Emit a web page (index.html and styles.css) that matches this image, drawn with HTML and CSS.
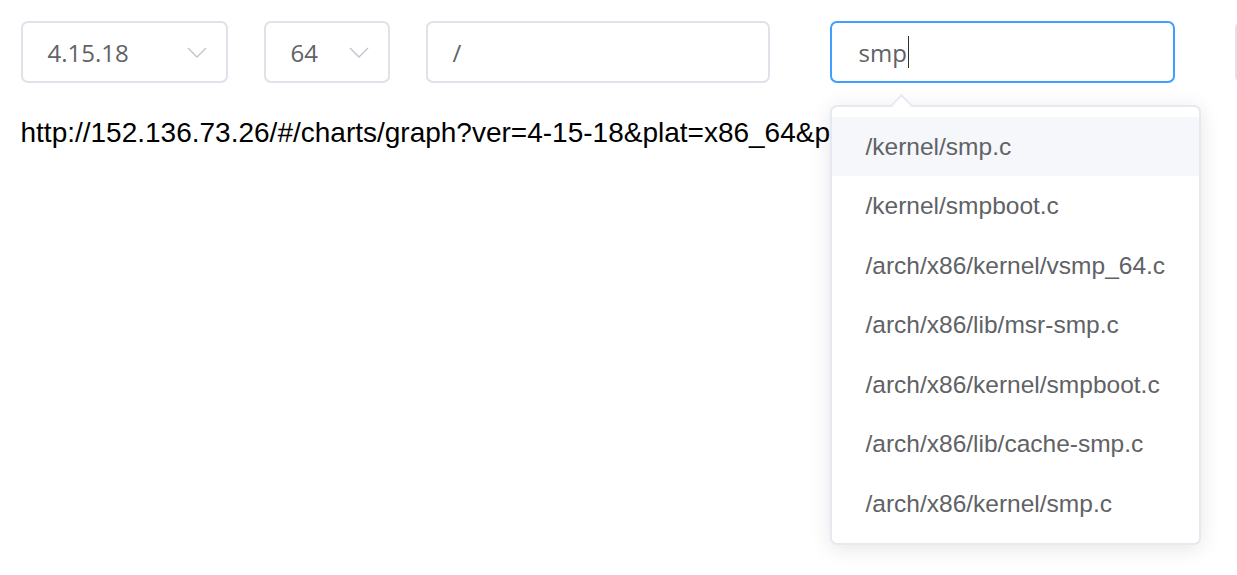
FILE: index.html
```html
<!DOCTYPE html>
<html lang="en">
<head>
<meta charset="utf-8">
<title>Graph search</title>
<link rel="stylesheet" href="styles.css">
</head>
<body>
<div class="page">
  <div class="toolbar">
    <div class="field select select-ver">
      <span class="value">4.15.18</span>
      <svg class="chevron" width="20" height="11" viewBox="0 0 20 11"><polyline points="1,1 10,10 19,1" fill="none" stroke="#c0c4cc" stroke-width="1.4"/></svg>
    </div>
    <div class="field select select-plat">
      <span class="value">64</span>
      <svg class="chevron" width="20" height="11" viewBox="0 0 20 11"><polyline points="1,1 10,10 19,1" fill="none" stroke="#c0c4cc" stroke-width="1.4"/></svg>
    </div>
    <div class="field input-path">
      <span class="value">/</span>
    </div>
    <div class="search-wrap">
      <div class="field input-search is-focus">
        <span class="value">smp</span><span class="caret"></span>
      </div>
      <div class="suggestions">
        <div class="arrow"></div>
        <ul class="suggest-list">
          <li class="item is-hover">/kernel/smp.c</li>
          <li class="item">/kernel/smpboot.c</li>
          <li class="item">/arch/x86/kernel/vsmp_64.c</li>
          <li class="item">/arch/x86/lib/msr-smp.c</li>
          <li class="item">/arch/x86/kernel/smpboot.c</li>
          <li class="item">/arch/x86/lib/cache-smp.c</li>
          <li class="item">/arch/x86/kernel/smp.c</li>
        </ul>
      </div>
    </div>
    <div class="field extra"></div>
  </div>
  <div class="url">http://152.136.73.26/#/charts/graph?ver=4-15-18&amp;plat=x86_64&amp;p</div>
</div>
</body>
</html>
```

FILE: styles.css
```css
html, body {
  margin: 0;
  padding: 0;
  background: #fff;
  overflow: hidden;
}

.page {
  padding: 21px 0 0 20.5px;
  height: 575px;
  box-sizing: border-box;
}

.toolbar {
  display: flex;
  flex-wrap: nowrap;
  align-items: flex-start;
  width: 1400px;
}

.field {
  box-sizing: border-box;
  height: 62px;
  border: 2px solid #dfe2e8;
  border-radius: 7px;
  background: #fff;
  display: flex;
  align-items: center;
  padding: 0 19px 0 25px;
  font-family: "Open Sans", "Noto Sans", sans-serif;
  font-size: 24px;
  color: #606266;
  flex: none;
}

.select {
  justify-content: space-between;
}

.select-ver {
  width: 207px;
  margin-right: 36px;
}

.select-plat {
  width: 126px;
  margin-right: 36px;
}

.chevron {
  display: block;
  margin-top: 1px;
}

.input-path {
  width: 344px;
  margin-right: 60px;
}

.search-wrap {
  position: relative;
  width: 345px;
  margin-right: 60px;
  flex: none;
}

.input-search {
  width: 345px;
  border-color: #409eff;
  padding-left: 27px;
}

.caret {
  display: inline-block;
  width: 1px;
  height: 32px;
  background: #303133;
  margin-left: 1px;
}

.extra {
  width: 200px;
}

.suggestions {
  position: absolute;
  left: 0;
  top: 84px;
  width: 371px;
  z-index: 10;
}

.arrow {
  position: absolute;
  top: -8px;
  left: 64px;
  width: 13px;
  height: 13px;
  background: #fff;
  border-left: 2px solid #e6e9f0;
  border-top: 2px solid #e6e9f0;
  transform: rotate(45deg);
  z-index: 2;
}

.suggest-list {
  list-style: none;
  margin: 0;
  padding: 9.5px 0;
  box-sizing: border-box;
  background: #fff;
  border: 2px solid #e6e9f0;
  border-radius: 7px;
  box-shadow: 0 3.5px 21px 0 rgba(0, 0, 0, 0.1);
  position: relative;
  z-index: 1;
}

.item {
  height: 59.5px;
  line-height: 59.5px;
  padding: 0 34px;
  font-family: "Liberation Sans", Arial, sans-serif;
  font-size: 24.5px;
  color: #606266;
  white-space: nowrap;
}

.item.is-hover {
  background: #f5f7fa;
}

.url {
  margin-top: 34px;
  font-family: "Liberation Sans", Arial, sans-serif;
  font-size: 28px;
  color: #000;
  white-space: nowrap;
}
```
